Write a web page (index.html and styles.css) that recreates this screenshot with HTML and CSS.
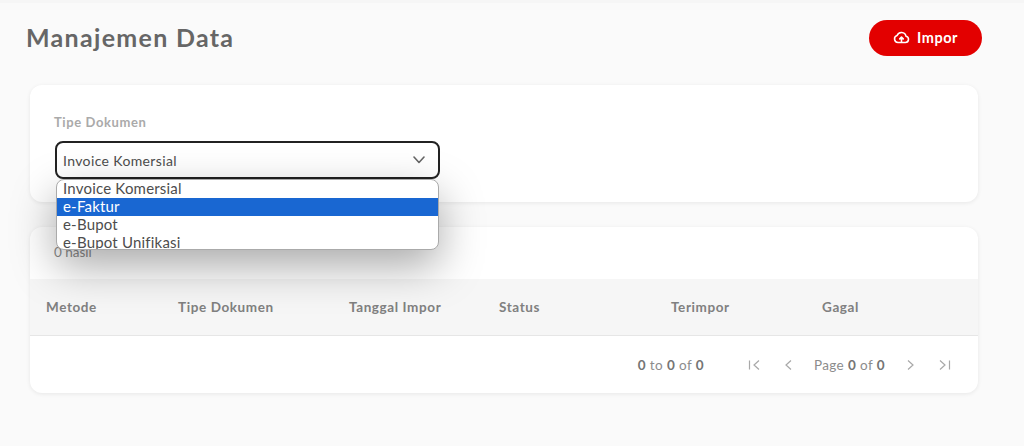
FILE: index.html
```html
<!DOCTYPE html>
<html lang="en">
<head>
  <meta charset="UTF-8" />
  <title>Manajemen Data</title>
  <link rel="stylesheet" href="styles.css">
</head>
<body>
  <div class="top-strip"></div>
  <main class="page">
    <header class="page-head">
      <h1>Manajemen Data</h1>
      <button class="btn-import" type="button">
        <svg width="17" height="17" viewBox="0 0 24 24" fill="none" stroke="currentColor" stroke-width="2.2" stroke-linecap="round" stroke-linejoin="round">
          <path d="M7 19h10.500a4.500 4.500 0 0 0 .8-8.900A6.500 6.500 0 0 0 5.800 9.200 5 5 0 0 0 7 19z"/>
          <path d="M12 18v-6M9.500 14l2.500-2.500 2.500 2.500"/>
        </svg>
        Impor
      </button>
    </header>

    <section class="card filter-card">
      <label class="field-label">Tipe Dokumen</label>
      <div class="select-wrap">
        <div class="select-box">
          <span>Invoice Komersial</span>
          <svg width="12" height="8" viewBox="0 0 12 8" fill="none" stroke="#666" stroke-width="1.600" stroke-linecap="round" stroke-linejoin="round"><path d="M1 1l5 5.500L11 1"/></svg>
        </div>
        <ul class="select-menu">
          <li>Invoice Komersial</li>
          <li class="active">e-Faktur</li>
          <li>e-Bupot</li>
          <li>e-Bupot Unifikasi</li>
        </ul>
      </div>
    </section>

    <section class="card table-card">
      <div class="result-count">0 hasil</div>
      <div class="table-head">
        <div>Metode</div>
        <div>Tipe Dokumen</div>
        <div>Tanggal Impor</div>
        <div>Status</div>
        <div>Terimpor</div>
        <div>Gagal</div>
      </div>
      <div class="table-foot">
        <span class="range"><b>0</b> to <b>0</b> of <b>0</b></span>
        <div class="pager">
          <svg width="14" height="14" viewBox="0 0 14 14"><path d="M1.500 2.500v9M11 2.500 6 7l5 4.500"/></svg>
          <svg width="14" height="14" viewBox="0 0 14 14"><path d="M10 2.500 5 7l5 4.500"/></svg>
          <span class="page-text">Page <b>0</b> of <b>0</b></span>
          <svg width="14" height="14" viewBox="0 0 14 14"><path d="M4 2.500 9 7l-5 4.500"/></svg>
          <svg width="14" height="14" viewBox="0 0 14 14"><path d="M3 2.500 8 7l-5 4.500M12.500 2.500v9"/></svg>
        </div>
      </div>
    </section>
  </main>
</body>
</html>
```

FILE: styles.css
```css
* {
  box-sizing: border-box;
}

html, body {
  height: 100%;
}

body {
  margin: 0;
  overflow: hidden;
  background-color: #fafafa;
  color: #555;
  font-family: 'Lato', sans-serif;
}

.top-strip {
  height: 3px;
  background-color: #f6f6f6;
}

.page {
  padding: 17px 46px 0 30px;
}

.page-head {
  display: flex;
  justify-content: space-between;
  align-items: center;
  height: 36px;
  margin-right: -4px;
  margin-bottom: 29px;
}

.page-head h1 {
  margin: 0 0 3px -4px;
  font-size: 25px;
  font-weight: 700;
  letter-spacing: 1.3px;
  color: #666;
}

.btn-import {
  display: flex;
  align-items: center;
  justify-content: center;
  gap: 7px;
  width: 113px;
  height: 36px;
  padding-bottom: 2px;
  border: none;
  border-radius: 18px;
  background-color: #e30000;
  color: #fff;
  font-family: inherit;
  font-size: 14.5px;
  font-weight: 700;
  letter-spacing: 0.5px;
}

.card {
  background-color: #fff;
  border-radius: 12px;
  box-shadow: 0 1px 4px rgba(0, 0, 0, 0.08);
}

.filter-card {
  height: 117px;
  margin-bottom: 25px;
  padding: 29px 25px 0;
}

.field-label {
  display: block;
  height: 16px;
  margin: 0 0 11px -1px;
  font-size: 13px;
  line-height: 16px;
  font-weight: 700;
  letter-spacing: 0.6px;
  color: #aaa;
}

.select-wrap {
  position: relative;
  width: 385px;
}

.select-box {
  display: flex;
  justify-content: space-between;
  align-items: center;
  height: 38px;
  padding: 0 13px 0 6px;
  border: 2px solid #222;
  border-radius: 8px;
  font-size: 14px;
  letter-spacing: 0.37px;
  color: #4d4d4d;
}

.select-menu {
  position: absolute;
  top: 38px;
  left: 1px;
  width: 383px;
  height: 71px;
  margin: 0;
  padding: 0;
  list-style: none;
  overflow: hidden;
  background-color: #fff;
  border: 1px solid #aaa;
  border-radius: 8px;
  box-shadow: 0 16px 44px rgba(0, 0, 0, 0.34);
  font-size: 15px;
  letter-spacing: 0.2px;
  color: #4d4d4d;
}

.select-menu li {
  height: 18px;
  padding-left: 6px;
  line-height: 17px;
}

.select-menu .active {
  background-color: #1967d2;
  color: #fff;
}

.table-card {
  height: 166px;
}

.result-count {
  height: 52px;
  padding: 17px 0 0 24px;
  font-size: 13.5px;
  color: #8c8c8c;
}

.table-head {
  display: grid;
  grid-template-columns: 132px 171px 150px 172px 151px 1fr;
  align-items: center;
  height: 57px;
  padding-left: 16px;
  background-color: #f6f6f6;
  border-bottom: 1px solid #e6e6e6;
  font-size: 13.5px;
  font-weight: 700;
  letter-spacing: 0.6px;
  color: #808080;
}

.table-foot {
  display: flex;
  justify-content: flex-end;
  align-items: center;
  height: 57px;
  padding-right: 27px;
  font-size: 13.5px;
  letter-spacing: 0.4px;
  color: #8c8c8c;
}

.table-foot b {
  color: #757575;
}

.range {
  margin-right: 44px;
}

.pager {
  display: flex;
  align-items: center;
  gap: 19px;
}

.pager svg {
  fill: none;
  stroke: #a8a8a8;
  stroke-width: 1.2;
}
```
